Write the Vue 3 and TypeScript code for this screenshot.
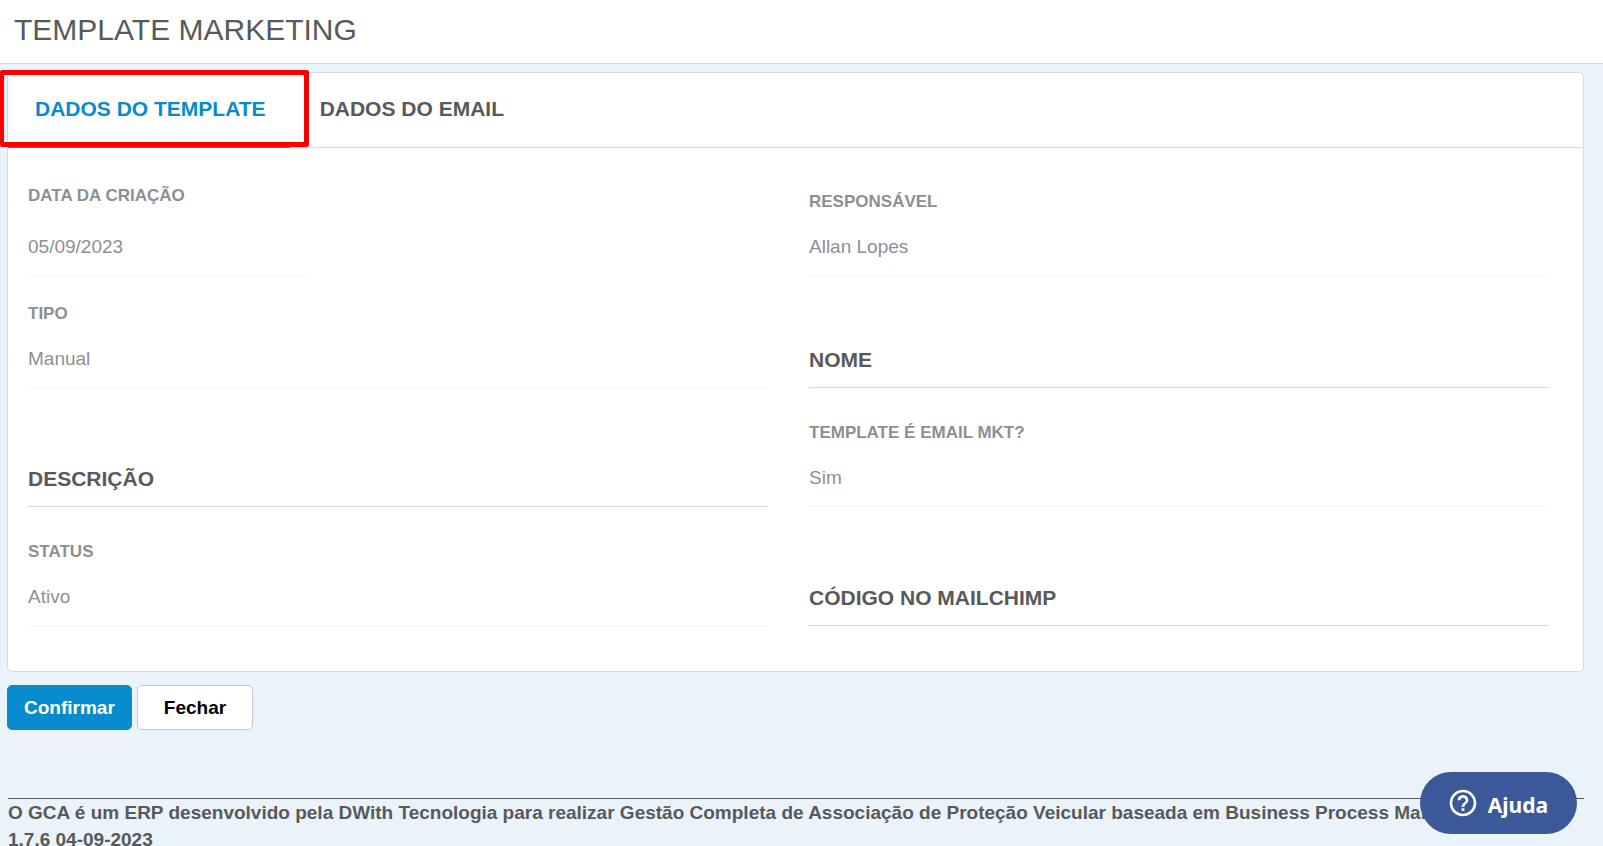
<script setup lang="ts">
import { ref } from 'vue'

interface Field {
  id: string
  label: string
  value: string
  kind?: 'date' | 'editable'
}

const tabs = ['DADOS DO TEMPLATE', 'DADOS DO EMAIL']
const activeTab = ref(0)

const fields = ref<Field[]>([
  { id: 'created', label: 'DATA DA CRIAÇÃO', value: '05/09/2023', kind: 'date' },
  { id: 'owner', label: 'RESPONSÁVEL', value: 'Allan Lopes' },
  { id: 'type', label: 'TIPO', value: 'Manual' },
  { id: 'name', label: 'NOME', value: '', kind: 'editable' },
  { id: 'description', label: 'DESCRIÇÃO', value: '', kind: 'editable' },
  { id: 'email-mkt', label: 'TEMPLATE É EMAIL MKT?', value: 'Sim' },
  { id: 'status', label: 'STATUS', value: 'Ativo' },
  { id: 'mailchimp', label: 'CÓDIGO NO MAILCHIMP', value: '', kind: 'editable' },
])
</script>

<template>
  <div class="page">
    <header class="header">
      <h1>TEMPLATE MARKETING</h1>
    </header>

    <main class="content">
      <section class="card">
        <nav class="tabs" role="tablist">
          <button
            v-for="(tab, i) in tabs"
            :key="tab"
            type="button"
            role="tab"
            class="tab"
            :class="{ active: activeTab === i }"
            :aria-selected="activeTab === i"
            @click="activeTab = i"
          >
            {{ tab }}
          </button>
          <span class="highlight" aria-hidden="true"></span>
        </nav>

        <form class="fields" @submit.prevent>
          <div v-for="f in fields" :key="f.id" class="field" :class="[f.kind, { filled: f.value }]">
            <label :for="f.id">{{ f.label }}</label>
            <input :id="f.id" v-model="f.value" type="text" :readonly="f.kind !== 'editable'" />
          </div>
        </form>
      </section>

      <div class="actions">
        <button type="button" class="btn primary">Confirmar</button>
        <button type="button" class="btn">Fechar</button>
      </div>

      <footer class="footer">
        O GCA é um ERP desenvolvido pela DWith Tecnologia para realizar Gestão Completa de Associação de
        Proteção Veicular baseada em Business Process Management.
        <span class="version">1.7.6 04-09-2023</span>
      </footer>
    </main>

    <button type="button" class="help">
      <svg viewBox="0 0 24 24" width="32" height="32" aria-hidden="true">
        <path
          fill="#fff"
          d="M11 18h2v-2h-2v2zm1-16C6.48 2 2 6.48 2 12s4.480 10 10 10 10-4.480 10-10S17.520 2 12 2zm0 18c-4.410 0-8-3.590-8-8s3.590-8 8-8 8 3.590 8 8-3.590 8-8 8zm0-14c-2.210 0-4 1.790-4 4h2c0-1.100.9-2 2-2s2 .9 2 2c0 2-3 1.750-3 5h2c0-2.250 3-2.500 3-5 0-2.210-1.790-4-4-4z"
        />
      </svg>
      <span>Ajuda</span>
    </button>
  </div>
</template>

<style>
html,
body {
  margin: 0;
  height: 100%;
  overflow: hidden;
  background: #eaf3fa;
}
#app {
  height: 100%;
}
</style>

<style scoped>
.page {
  height: 100%;
  overflow: hidden;
  font-family: 'Liberation Sans', Arial, sans-serif;
  font-size: 19px;
  color: #58595b;
  background: #eaf3fa;
}
button,
input {
  font: inherit;
  color: inherit;
}
.header {
  box-sizing: border-box;
  height: 64px;
  padding: 0 14px;
  display: flex;
  align-items: center;
  background: #fff;
  border-bottom: 1px solid #d9dadb;
}
h1 {
  margin: 0;
  padding-bottom: 4px;
  font-size: 30px;
  line-height: 36px;
  font-weight: 400;
}
.content {
  padding: 8px 19px 0 7px;
}
.card {
  background: #fff;
  border: 1px solid #d9dadb;
  border-radius: 5px;
}
.tabs {
  position: relative;
  display: flex;
  height: 74px;
  border-bottom: 1px solid #d9dadb;
}
.tab {
  padding: 0 24px 2px 27px;
  margin-bottom: -1px;
  border: 0;
  border-bottom: 1px solid transparent;
  background: none;
  font-size: 21px;
  font-weight: 700;
  cursor: pointer;
}
.tab.active {
  color: #088bce;
  border-bottom-color: #2a7fb5;
  min-width: 281px;
  text-align: left;
}
.tab + .tab {
  padding-left: 30px;
}
.highlight {
  position: absolute;
  box-sizing: border-box;
  left: -8px;
  top: -3px;
  width: 309px;
  height: 77px;
  border: 5px solid #f00;
  border-left-width: 4px;
  border-radius: 2px;
  pointer-events: none;
}
.fields {
  display: grid;
  grid-template-columns: 1fr 1fr;
  grid-template-rows: 128px 112px 119px 119px;
  column-gap: 41px;
  padding: 0 34px 45px 20px;
}
.field {
  position: relative;
  display: flex;
  flex-direction: column;
  justify-content: flex-end;
}
.field label {
  font-size: 17px;
  line-height: 20px;
  font-weight: 700;
  color: #8e8f91;
  margin-bottom: 10px;
}
.field input {
  box-sizing: border-box;
  width: 100%;
  height: 54px;
  padding: 0 0 4px;
  border: 0;
  border-bottom: 1px solid #f2f3f3;
  border-radius: 0;
  outline: 0;
  background: transparent;
  color: #8e8f91;
}
.field.date label {
  margin-bottom: 16px;
}
.field.date input {
  width: 278px;
}
.field.editable input {
  border-bottom-color: #d9dadb;
  color: #58595b;
}
.field.editable:not(.filled):not(:focus-within) label {
  position: absolute;
  left: 0;
  bottom: 16px;
  margin: 0;
  font-size: 21px;
  line-height: 24px;
  color: #58595b;
  pointer-events: none;
}
.actions {
  display: flex;
  gap: 5px;
  margin-top: 13px;
}
.btn {
  height: 45px;
  padding: 0 26px;
  border: 1px solid #c8c9ca;
  border-radius: 5px;
  background: #fff;
  color: #000;
  font-weight: 700;
  cursor: pointer;
}
.btn.primary {
  padding: 0 16px;
  background: #088bce;
  border-color: #2485bd;
  color: #fff;
}
.footer {
  margin: 68px 0 0 1px;
  border-top: 1px solid #58595b;
  font-weight: 700;
  line-height: 27px;
}
.version {
  white-space: nowrap;
}
.help {
  position: fixed;
  right: 26px;
  bottom: 12px;
  height: 62px;
  padding: 0 29px 0 27px;
  display: flex;
  align-items: center;
  gap: 9px;
  border: 0;
  border-radius: 31px;
  background: #3b5998;
  color: #fff;
  font-family: 'Noto Sans', sans-serif;
  font-size: 21px;
  font-weight: 700;
  cursor: pointer;
}
.help span {
  padding-top: 3px;
}
</style>
